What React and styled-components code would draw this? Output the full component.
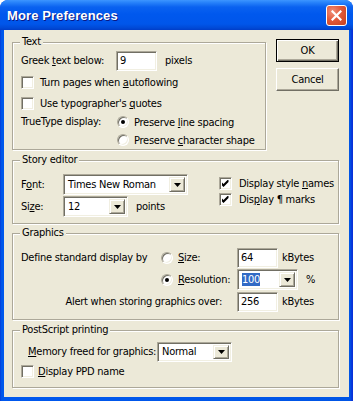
import React from "react";
import styled, { createGlobalStyle } from "styled-components";

const GlobalStyle = createGlobalStyle`
  html, body {
    margin: 0;
    padding: 0;
    background: #fff;
  }
  body {
    font-family: "DejaVu Sans Condensed", "Liberation Sans", Arial, sans-serif;
    font-size: 11px;
    letter-spacing: -0.25px;
    color: #000;
  }
  u {
    text-underline-offset: 1px;
  }
`;

const Window = styled.div`
  width: 353px;
  height: 401px;
  display: flex;
  flex-direction: column;
  background: linear-gradient(to right, #0831d9 0, #0055e5 1px, #0058ee 3px, #0055e5 350px, #0831d9 352px);
  border-radius: 8px 8px 0 0;
  overflow: hidden;
`;

const TitleBar = styled.div`
  height: 30px;
  flex: none;
  display: flex;
  align-items: center;
  justify-content: space-between;
  padding: 0 6px 0 7px;
  background: linear-gradient(
    to bottom,
    #3d95ff 0,
    #2b86fb 2px,
    #0a62f0 7px,
    #0058ee 14px,
    #0056ea 24px,
    #0049d6 28px,
    #003dc8 30px
  );
`;

const Title = styled.span`
  color: #fff;
  font-family: "Liberation Sans", Arial, sans-serif;
  font-weight: bold;
  font-size: 13px;
  text-shadow: 1px 1px 0 #0a1883;
  letter-spacing: 0.1px;
`;

const CloseButton = styled.div`
  width: 21px;
  height: 21px;
  box-sizing: border-box;
  border: 1px solid #fff;
  border-radius: 3px;
  background: radial-gradient(circle at 30% 30%, #f0907a 0, #e2593a 45%, #c8401c 100%);
  display: flex;
  align-items: center;
  justify-content: center;
  margin-top: 1px;
`;

const Client = styled.div`
  flex: 1;
  margin: 0 4px 4px;
  background: #ece9d8;
  padding: 9px 10px 0 8px;
  display: flex;
  flex-direction: column;
`;

const TopRow = styled.div`
  display: flex;
  align-items: flex-start;
  gap: 10px;
`;

const Group = styled.div`
  position: relative;
  box-sizing: border-box;
  width: ${(p) => p.$w || 327}px;
  height: ${(p) => p.$h}px;
  margin-top: ${(p) => p.$mt}px;
  padding: ${(p) => p.$pt}px 8px 0;
  border: 1px solid #aca899;
  box-shadow: 1px 1px 0 #fff, inset 1px 1px 0 #fff;
`;

const Legend = styled.span`
  position: absolute;
  top: -8px;
  left: 7px;
  padding: 0 2px;
  line-height: 14px;
  background: #ece9d8;
`;

const Row = styled.div`
  display: flex;
  align-items: center;
  height: ${(p) => p.$h}px;
  margin-bottom: ${(p) => p.$mb || 0}px;
  padding-left: ${(p) => p.$pl || 0}px;
`;

const Label = styled.span`
  flex: none;
  width: ${(p) => (p.$w ? `${p.$w}px` : "auto")};
  text-align: ${(p) => (p.$right ? "right" : "left")};
  padding-right: ${(p) => p.$pr || 0}px;
  box-sizing: border-box;
  margin-left: ${(p) => p.$ml || 0}px;
  white-space: nowrap;
`;

const sunken = `
  box-sizing: border-box;
  background: #fff;
  border-top: 1px solid #aca899;
  border-left: 1px solid #aca899;
  border-bottom: 1px solid #fff;
  border-right: 1px solid #fff;
  box-shadow: inset 1px 1px 0 #716f64, inset -1px -1px 0 #f1efe2;
`;

const TextBox = styled.div`
  ${sunken}
  width: ${(p) => p.$w}px;
  height: 20px;
  padding: 0 3px;
  display: flex;
  align-items: center;
  flex: none;
`;

const Combo = styled.div`
  ${sunken}
  width: ${(p) => p.$w}px;
  height: ${(p) => p.$h || 21}px;
  padding: 2px;
  display: flex;
  align-items: center;
  flex: none;
`;

const ComboText = styled.span`
  flex: 1;
  padding-left: 2px;
  white-space: nowrap;
  overflow: hidden;
`;

const Selected = styled.span`
  background: #316ac5;
  color: #fff;
`;

const ArrowButton = styled.div`
  width: 16px;
  align-self: stretch;
  box-sizing: border-box;
  background: #ece9d8;
  border-top: 1px solid #f1efe2;
  border-left: 1px solid #f1efe2;
  border-right: 1px solid #716f64;
  border-bottom: 1px solid #716f64;
  box-shadow: inset 1px 1px 0 #fff, inset -1px -1px 0 #aca899;
  display: flex;
  align-items: center;
  justify-content: center;
`;

const Box = styled.div`
  ${sunken}
  width: 13px;
  height: 13px;
  flex: none;
  display: flex;
  align-items: center;
  justify-content: center;
`;

const Radio = styled.div`
  width: 12px;
  height: 12px;
  flex: none;
  box-sizing: border-box;
  border-radius: 50%;
  background: #fff;
  border: 1px solid;
  border-color: #aca899 #fff #fff #aca899;
  box-shadow: inset 1px 1px 0 #716f64, inset -1px -1px 0 #f1efe2;
  display: flex;
  align-items: center;
  justify-content: center;
`;

const Dot = styled.div`
  width: 4px;
  height: 4px;
  border-radius: 50%;
  background: #000;
`;

const Option = styled.div`
  display: flex;
  align-items: center;
  gap: ${(p) => p.$gap || 6}px;
  height: ${(p) => p.$h || 18}px;
  width: ${(p) => (p.$w ? `${p.$w}px` : "auto")};
  flex: none;
  white-space: nowrap;
`;

const Column = styled.div`
  display: flex;
  flex-direction: column;
  width: ${(p) => (p.$w ? `${p.$w}px` : "auto")};
  gap: ${(p) => p.$gap || 0}px;
  margin-top: ${(p) => p.$mt || 0}px;
  flex: none;
`;

const Split = styled.div`
  display: flex;
  align-items: flex-start;
`;

const Buttons = styled.div`
  display: flex;
  flex-direction: column;
  gap: 6px;
`;

const Button = styled.div`
  width: 63px;
  height: 23px;
  box-sizing: border-box;
  display: flex;
  align-items: center;
  justify-content: center;
  background: #ece9d8;
  border: 1px solid;
  border-color: ${(p) => (p.$default ? "#000" : "#fff #716f64 #716f64 #fff")};
  box-shadow: ${(p) =>
    p.$default
      ? "inset 1px 1px 0 #fff, inset -1px -1px 0 #716f64, inset -2px -2px 0 #aca899"
      : "inset -1px -1px 0 #aca899"};
`;

const Check = () => (
  <svg width="7" height="7" viewBox="0 0 7 7">
    <path d="M0 2 L2 4 L6 0 L7 0 L7 2 L2 7 L0 5 Z" fill="#000" transform="translate(-0.5 0)" />
  </svg>
);

const Arrow = () => (
  <svg width="7" height="4" viewBox="0 0 7 4">
    <path d="M0 0 H7 L3.5 4 Z" fill="#000" />
  </svg>
);

const CheckBox = ({ checked, children, gap }) => (
  <Option $gap={gap}>
    <Box>{checked && <Check />}</Box>
    <span>{children}</span>
  </Option>
);

const RadioOption = ({ on, children, w, h }) => (
  <Option $gap={5} $w={w} $h={h}>
    <Radio>{on && <Dot />}</Radio>
    <span>{children}</span>
  </Option>
);

const Dropdown = ({ w, h, children }) => (
  <Combo $w={w} $h={h}>
    <ComboText>{children}</ComboText>
    <ArrowButton>
      <Arrow />
    </ArrowButton>
  </Combo>
);

export default function App() {
  return (
    <>
      <GlobalStyle />
      <Window>
        <TitleBar>
          <Title>More Preferences</Title>
          <CloseButton>
            <svg width="11" height="11" viewBox="0 0 11 11">
              <path d="M1.5 1.5 L9.5 9.5 M9.5 1.5 L1.5 9.5" stroke="#fff" strokeWidth="2.2" strokeLinecap="square" />
            </svg>
          </CloseButton>
        </TitleBar>
        <Client>
          <TopRow>
            <Group $w={254} $h={108} $mt={3} $pt={7}>
              <Legend>Text</Legend>
              <Row $h={21}>
                <Label $w={95}>
                  Greek <u>t</u>ext below:
                </Label>
                <TextBox $w={41}>9</TextBox>
                <Label $ml={8}>pixels</Label>
              </Row>
              <Row $h={22}>
                <CheckBox>
                  Turn pages when <u>a</u>utoflowing
                </CheckBox>
              </Row>
              <Row $h={20}>
                <CheckBox>
                  Use typographer's <u>q</u>uotes
                </CheckBox>
              </Row>
              <Split>
                <Label $w={96} style={{ lineHeight: "18px" }}>
                  TrueType display:
                </Label>
                <Column>
                  <RadioOption on>
                    Preserve <u>l</u>ine spacing
                  </RadioOption>
                  <RadioOption>
                    Preserve <u>c</u>haracter shape
                  </RadioOption>
                </Column>
              </Split>
            </Group>
            <Buttons>
              <Button $default>OK</Button>
              <Button>Cancel</Button>
            </Buttons>
          </TopRow>

          <Group $h={64} $mt={10} $pt={13}>
            <Legend>Story editor</Legend>
            <Split>
              <Column $w={198} $gap={1}>
                <Row $h={21}>
                  <Label $w={42}>
                    F<u>o</u>nt:
                  </Label>
                  <Dropdown w={125}>Times New Roman</Dropdown>
                </Row>
                <Row $h={21}>
                  <Label $w={42}>
                    Si<u>z</u>e:
                  </Label>
                  <Dropdown w={65}>12</Dropdown>
                  <Label $ml={8}>points</Label>
                </Row>
              </Column>
              <Column $mt={1}>
                <Option $h={16} $gap={7}>
                  <Box>
                    <Check />
                  </Box>
                  <span>
                    Display style <u>n</u>ames
                  </span>
                </Option>
                <Option $h={16} $gap={7}>
                  <Box>
                    <Check />
                  </Box>
                  <span>
                    Dis<u>p</u>lay ¶ marks
                  </span>
                </Option>
              </Column>
            </Split>
          </Group>

          <Group $h={87} $mt={9} $pt={13}>
            <Legend>Graphics</Legend>
            <Row $h={21} $mb={1}>
              <Label $w={140}>Define standard display by</Label>
              <RadioOption w={76} h={21}>
                <u>S</u>ize:
              </RadioOption>
              <TextBox $w={41}>64</TextBox>
              <Label $ml={4}>kBytes</Label>
            </Row>
            <Row $h={21} $mb={1}>
              <Label $w={140} />
              <RadioOption on w={76} h={21}>
                <u>R</u>esolution:
              </RadioOption>
              <Dropdown w={61}>
                <Selected>100</Selected>
              </Dropdown>
              <Label $ml={8}>%</Label>
            </Row>
            <Row $h={21}>
              <Label $w={216} $right $pr={15}>
                Alert when storing graphics over:
              </Label>
              <TextBox $w={41}>256</TextBox>
              <Label $ml={4}>kBytes</Label>
            </Row>
          </Group>

          <Group $h={58} $mt={10} $pt={10}>
            <Legend>PostScript printing</Legend>
            <Row $h={21} $pl={7}>
              <Label $w={129}>
                <u>M</u>emory freed for graphics:
              </Label>
              <Dropdown w={75} h={20}>
                Normal
              </Dropdown>
            </Row>
            <Row $h={18}>
              <CheckBox gap={4}>
                <u>D</u>isplay PPD name
              </CheckBox>
            </Row>
          </Group>
        </Client>
      </Window>
    </>
  );
}
